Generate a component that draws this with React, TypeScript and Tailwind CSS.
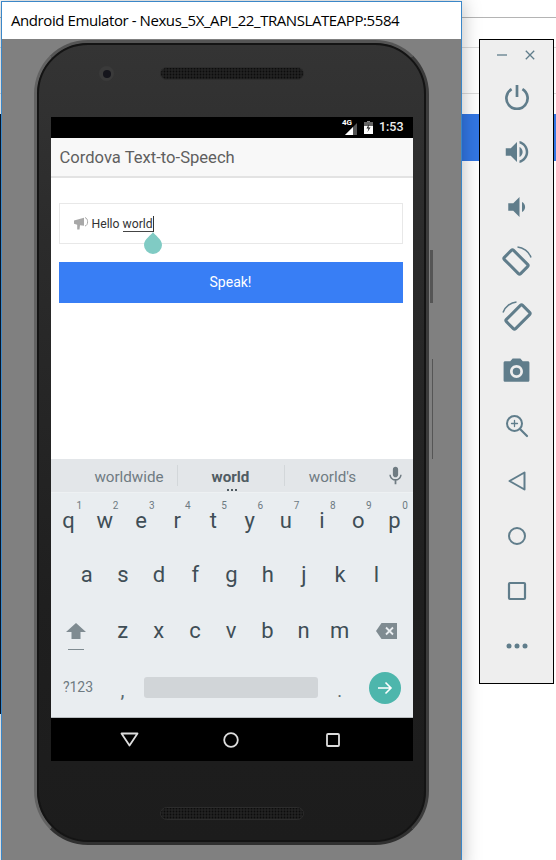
import React from "react";

const iconColor = "#607d8b";

function Grille() {
  return (
    <svg width="144" height="13" viewBox="0 0 144 13">
      <defs>
        <pattern id="holes" width="3" height="3" patternUnits="userSpaceOnUse">
          <rect width="3" height="3" fill="#222222" />
          <circle cx="1.5" cy="1.5" r="0.9" fill="#0c0c0c" />
        </pattern>
      </defs>
      <rect x="0.5" y="0.5" width="143" height="12" rx="6" fill="url(#holes)" stroke="#2c2c2c" />
    </svg>
  );
}

function PanelIcon({ children, h = "h-[55px]" }: { children: React.ReactNode; h?: string }) {
  return <div className={`flex items-center justify-center ${h}`}>{children}</div>;
}

function SidePanel() {
  return (
    <div className="absolute left-[479px] top-[39px] w-[75px] h-[645px] border border-black bg-[#eeeeee] flex flex-col">
      <div className="flex items-center h-[30px] pl-[17px] gap-[18px]">
        <svg width="10" height="10" viewBox="0 0 10 10"><path d="M0 5h10" stroke={iconColor} strokeWidth="1.3" /></svg>
        <svg width="10" height="10" viewBox="0 0 10 10"><path d="M.8.8l8.4 8.4M9.2.8L.8 9.2" stroke={iconColor} strokeWidth="1.3" /></svg>
      </div>
      <div className="flex flex-col -mt-[1px]">
        <PanelIcon>
          <svg width="26" height="26" viewBox="0 0 26 26" fill="none" stroke={iconColor} strokeWidth="2.7">
            <path d="M13 1v12" />
            <path d="M7.6 5.2a10.6 10.6 0 1 0 10.8 0" />
          </svg>
        </PanelIcon>
        <PanelIcon>
          <svg width="30" height="30" viewBox="0 0 24 24" fill={iconColor}>
            <path d="M3 9v6h4l5 5V4L7 9H3zm13.5 3c0-1.77-1.02-3.29-2.5-4.03v8.05c1.48-.73 2.5-2.25 2.5-4.02zM14 3.23v2.06c2.89.86 5 3.54 5 6.71s-2.11 5.85-5 6.71v2.06c4.01-.91 7-4.49 7-8.77s-2.99-7.86-7-8.77z" />
          </svg>
        </PanelIcon>
        <PanelIcon>
          <svg width="30" height="30" viewBox="0 0 24 24" fill={iconColor}>
            <path d="M18.5 12c0-1.77-1.02-3.29-2.5-4.03v8.05c1.48-.73 2.5-2.25 2.5-4.02zM5 9v6h4l5 5V4L9 9H5z" />
          </svg>
        </PanelIcon>
        <PanelIcon h="h-[54px]">
          <svg width="30" height="30" viewBox="0 0 30 30" fill="none" stroke={iconColor}>
            <rect x="7.5" y="4.5" width="13" height="23" rx="1.6" strokeWidth="3" transform="rotate(-45 14 16)" />
            <path d="M15.5 1c5.500.5 11.500 4.500 13.500 10.500" strokeWidth="1.5" />
          </svg>
        </PanelIcon>
        <PanelIcon>
          <svg width="30" height="30" viewBox="0 0 30 30" fill="none" stroke={iconColor}>
            <rect x="9.5" y="4.5" width="13" height="23" rx="1.6" strokeWidth="3" transform="rotate(45 16 16)" />
            <path d="M14.500 1C9 1.500 3 5.500 1 11.500" strokeWidth="1.5" />
          </svg>
        </PanelIcon>
        <PanelIcon h="h-[56px]">
          <svg width="31" height="31" viewBox="0 0 24 24" fill={iconColor}>
            <path fillRule="evenodd" d="M9 2L7.17 4H3.5C2.4 4 2 4.4 2 5.5v13c0 1.100.4 1.500 1.500 1.500h17c1.100 0 1.500-.4 1.500-1.500v-13C22 4.400 21.600 4 20.500 4h-3.670L15 2H9zm3 15c-2.760 0-5-2.240-5-5s2.240-5 5-5 5 2.240 5 5-2.240 5-5 5z" />
            <circle cx="12" cy="12" r="2.900" />
          </svg>
        </PanelIcon>
        <PanelIcon h="h-[54px]">
          <svg width="24" height="24" viewBox="0 0 24 24" fill="none" stroke={iconColor} strokeLinecap="round">
            <circle cx="9.500" cy="9.500" r="7.500" strokeWidth="2" />
            <path d="M15 15l7 7" strokeWidth="2.200" />
            <path d="M9.500 6.500v6M6.500 9.500h6" strokeWidth="1.300" />
          </svg>
        </PanelIcon>
        <PanelIcon h="h-[56px]">
          <svg width="18" height="20" viewBox="0 0 18 20" fill="none" stroke={iconColor} strokeWidth="2" strokeLinejoin="round">
            <path d="M16.500 1.500v17L1.500 10z" />
          </svg>
        </PanelIcon>
        <PanelIcon h="h-[54px]">
          <svg width="20" height="20" viewBox="0 0 20 20" fill="none" stroke={iconColor} strokeWidth="2">
            <circle cx="10" cy="10" r="8" />
          </svg>
        </PanelIcon>
        <PanelIcon>
          <svg width="20" height="20" viewBox="0 0 20 20" fill="none" stroke={iconColor} strokeWidth="2.200">
            <rect x="2" y="2" width="16" height="16" rx="1" />
          </svg>
        </PanelIcon>
        <PanelIcon>
          <svg width="22" height="6" viewBox="0 0 22 6" fill={iconColor}>
            <circle cx="3" cy="3" r="2.500" />
            <circle cx="11" cy="3" r="2.500" />
            <circle cx="19" cy="3" r="2.500" />
          </svg>
        </PanelIcon>
      </div>
    </div>
  );
}

function StatusBar() {
  return (
    <div className="h-[21px] bg-black flex items-center justify-end pr-[9px] gap-[6px]">
      <div className="relative w-[14px] h-[14px]">
        <svg width="14" height="14" viewBox="0 0 14 14" className="absolute left-0 top-[1px]">
          <path d="M13 1v12H1z" fill="#555555" />
          <path d="M9 5v8H1z" fill="#ffffff" />
        </svg>
        <span className="absolute left-[-2px] top-[-2px] text-[8px] leading-[8px] font-bold text-white font-['Roboto',sans-serif]">4G</span>
      </div>
      <svg width="9" height="13" viewBox="0 0 9 13">
        <rect x="3" y="0" width="3" height="2" fill="#888888" />
        <rect x="0" y="1" width="9" height="12" fill="#ffffff" />
        <rect x="0" y="1" width="9" height="4" fill="#666666" />
        <path d="M5 3L2.500 7.500h2L3.500 11 6.500 6.500h-2z" fill="#222222" />
      </svg>
      <span className="text-[12.500px] font-medium text-[#eeeeee] font-['Roboto',sans-serif] leading-none">1:53</span>
    </div>
  );
}

function AppContent() {
  return (
    <div className="flex-1 bg-white flex flex-col">
      <div className="h-[40px] bg-[#f8f8f8] border-b-2 border-[#e3e3e3] flex items-center pl-[9px] pt-[2px] text-[16.600px] text-[#5f5f5f] font-['Roboto',sans-serif]">
        Cordova Text-to-Speech
      </div>
      <div className="pl-[8px] pr-[10px] pt-[25px]">
        <div className="relative h-[41px] border border-[#e8e8e8] flex items-center pl-[14px] gap-[3px]">
          <svg width="15" height="13" viewBox="0 0 15 13" fill="#a8a8a8">
            <path d="M0 3.500L10 .8v8L6 8.300l-.5 4.200H3.200L3.200 7.800 0 6.800z" />
            <path d="M11 .6c1.800.4 2.600 2.200 2.600 4.200s-.8 3.800-2.600 4.200" fill="none" stroke="#a8a8a8" strokeWidth="1" />
          </svg>
          <span className="text-[12.200px] text-[#333333] font-['Roboto',sans-serif] leading-none pt-[1px]">
            Hello <span className="relative">world
              <span className="absolute left-0 right-0 top-[14px] h-px bg-[#444444]" />
              <span className="absolute right-[-1px] top-[-1px] w-px h-[16px] bg-[#333333]" />
            </span>
          </span>
          <svg width="18" height="22" viewBox="0 0 18 22" className="absolute left-[84px] top-[28px]">
            <path d="M9 0c1.500 3 9 7 9 13a9 9 0 0 1-18 0C0 7 7.500 3 9 0z" fill="#80cbc4" />
          </svg>
        </div>
        <div className="mt-[18px] h-[41px] bg-[#387ef5] flex items-center justify-center text-[14px] text-white font-['Roboto',sans-serif]">
          Speak!
        </div>
      </div>
    </div>
  );
}

const row1 = [["q", "1"], ["w", "2"], ["e", "3"], ["r", "4"], ["t", "5"], ["y", "6"], ["u", "7"], ["i", "8"], ["o", "9"], ["p", "0"]];
const row2 = ["a", "s", "d", "f", "g", "h", "j", "k", "l"];
const row3 = ["z", "x", "c", "v", "b", "n", "m"];

function Keyboard() {
  return (
    <div className="h-[259px] bg-[#e9edf0] border-b border-[#b8bcbf] font-['Roboto',sans-serif] flex flex-col">
      <div className="relative h-[34px] bg-[#e3e6e9] border-b border-[#eef1f3] flex items-center pl-[26px] text-[15.200px] text-[#6f7b82]">
        <div className="w-[101px] pl-[5px] text-center border-r border-[#d3d7da] h-[21px] leading-[25px]">worldwide</div>
        <div className="w-[107px] text-center border-r border-[#d3d7da] h-[21px] leading-[25px] font-bold text-[#515c63]">world</div>
        <div className="w-[96px] text-center h-[21px] leading-[25px]">world's</div>
        <svg width="21" height="21" viewBox="0 0 24 24" fill="#6f7b82" className="ml-[4px]">
          <path d="M12 14c1.660 0 3-1.340 3-3V5c0-1.660-1.340-3-3-3S9 3.340 9 5v6c0 1.660 1.340 3 3 3zm5.300-3c0 3-2.540 5.100-5.300 5.100S6.700 14 6.700 11H5c0 3.410 2.720 6.230 6 6.720V22h2v-4.280c3.280-.480 6-3.300 6-6.720h-1.700z" />
        </svg>
        <div className="absolute left-[176px] top-[30px] flex gap-[2px]">
          <span className="w-[2px] h-[2px] bg-[#515c63]" />
          <span className="w-[2px] h-[2px] bg-[#515c63]" />
          <span className="w-[2px] h-[2px] bg-[#515c63]" />
        </div>
      </div>
      <div className="grid grid-cols-10 h-[55px] text-[#3f4e56] text-[22px] leading-none">
        {row1.map(([k, n]) => (
          <div key={k} className="relative flex items-center justify-center">
            {k}
            <span className="absolute left-[26px] top-[8px] text-[10px] text-[#6d7a82]">{n}</span>
          </div>
        ))}
      </div>
      <div className="grid grid-cols-9 h-[55px] px-[18px] text-[#3f4e56] text-[22px] leading-none">
        {row2.map((k) => (
          <div key={k} className="flex items-center justify-center pb-[1px]">{k}</div>
        ))}
      </div>
      <div className="flex h-[55px] text-[#3f4e56] text-[22px] leading-none">
        <div className="w-[54px] flex flex-col items-center pt-[20px] pr-[4px] gap-[10px]">
          <svg width="20" height="16" viewBox="0 0 20 16" fill="#7f8b91">
            <path d="M10 0l10 9h-5.500v7h-9V9H0z" />
          </svg>
          <span className="w-[16px] h-px bg-[#7f8b91]" />
        </div>
        {row3.map((k) => (
          <div key={k} className="w-[36.200px] flex items-center justify-center">{k}</div>
        ))}
        <div className="flex-1 flex items-center justify-center pl-[2px]">
          <svg width="21" height="16" viewBox="0 0 21 16">
            <path d="M5.500 0H21v16H5.500L0 8z" fill="#7f8b91" />
            <path d="M10 4.500l7 7M17 4.500l-7 7" stroke="#e9edf0" strokeWidth="1.800" />
          </svg>
        </div>
      </div>
      <div className="flex-1 flex items-center text-[#6f7b82]">
        <div className="w-[54px] text-center text-[14px] pl-[1px]">?123</div>
        <div className="w-[36px] text-center text-[20px] text-[#5a6a72] leading-none pt-[4px]">,</div>
        <div className="w-[174px] h-[21px] ml-[3px] rounded-[3px] bg-[#d1d5d8]" />
        <div className="w-[44px] text-center text-[18px] text-[#5a6a72] leading-none pt-[6px]">.</div>
        <div className="ml-[7px] w-[32px] h-[32px] rounded-full bg-[#4db6ac] flex items-center justify-center">
          <svg width="16" height="16" viewBox="0 0 16 16" fill="none" stroke="#ffffff" strokeWidth="1.600">
            <path d="M1 8h13M8.500 2.500L14 8l-5.500 5.500" />
          </svg>
        </div>
      </div>
    </div>
  );
}

function NavBar() {
  return (
    <div className="h-[43px] bg-black grid grid-cols-3 pl-[28px] pr-[29px] items-center">
      <div className="flex justify-center">
        <svg width="19" height="15" viewBox="0 0 19 15" fill="none" stroke="#dddddd" strokeWidth="1.800" strokeLinejoin="round">
          <path d="M1.500 1.500h16L9.500 13.500z" />
        </svg>
      </div>
      <div className="flex justify-center">
        <svg width="16" height="16" viewBox="0 0 16 16" fill="none" stroke="#dddddd" strokeWidth="1.800">
          <circle cx="8" cy="8" r="6.800" />
        </svg>
      </div>
      <div className="flex justify-center">
        <svg width="14" height="14" viewBox="0 0 14 14" fill="none" stroke="#dddddd" strokeWidth="1.800">
          <rect x="1" y="1" width="12" height="12" rx="1" />
        </svg>
      </div>
    </div>
  );
}

function Phone() {
  return (
    <div className="relative ml-[32px] mt-[1px] w-[395px] h-[805px] rounded-[54px] bg-[#2e2e2e] border-[3px] border-l-[#626262] border-t-[#555555] border-r-[#3c3c3c] border-b-[#303030]">
      <div className="w-full h-full rounded-[51px] border-2 border-[#141414] bg-[linear-gradient(180deg,#343434_0%,#2b2b2b_25%,#1f1f1f_70%,#1c1c1c_100%)] flex flex-col items-center pt-[22px]">
        <div className="relative w-full flex justify-center h-[13px]">
          <Grille />
          <div className="absolute left-[60px] top-[-1px] w-[15px] h-[15px] rounded-full bg-[#3a3a3a] flex items-center justify-center">
            <span className="w-[8px] h-[8px] rounded-full bg-[#15151c]" />
          </div>
        </div>
        <div className="mt-[37px] w-[362px] h-[644px] flex flex-col">
          <StatusBar />
          <AppContent />
          <Keyboard />
          <NavBar />
        </div>
        <div className="mt-[46px] flex justify-center">
          <Grille />
        </div>
      </div>
      <div className="absolute right-[-7px] top-[207px] w-[3px] h-[53px] bg-[#555555]" />
      <div className="absolute right-[-7px] top-[316px] w-px h-[100px] bg-[#555555]" />
    </div>
  );
}

export default function App() {
  return (
    <div className="relative w-[556px] h-[860px] overflow-hidden bg-white">
      <div className="absolute left-0 right-0 top-[17px] h-px bg-[#b4b4b4]" />
      <div className="absolute left-0 right-0 top-[47px] h-px bg-[#dcdcdc]" />
      <div className="absolute left-0 right-0 top-[93px] h-px bg-[#dcdcdc]" />
      <div className="absolute left-0 right-0 top-[114px] h-[47px] bg-[#3276e4]" />
      <div className="absolute left-0 top-[114px] w-[2px] h-[600px] bg-[#0c1a2c]" />

      <div className="absolute left-[1px] top-[1px] w-[461px] h-[870px] border border-[#3b87c8] bg-[#808080] shadow-[0_0_18px_rgba(0,0,0,0.28)] flex flex-col">
        <div className="h-[37px] bg-white flex items-center pl-[9px] text-[15px] text-black font-['Open_Sans',sans-serif] whitespace-nowrap tracking-[-0.42px]">
          Android Emulator - Nexus_5X_API_22_TRANSLATEAPP:5584
        </div>
        <Phone />
      </div>

      <SidePanel />
    </div>
  );
}
